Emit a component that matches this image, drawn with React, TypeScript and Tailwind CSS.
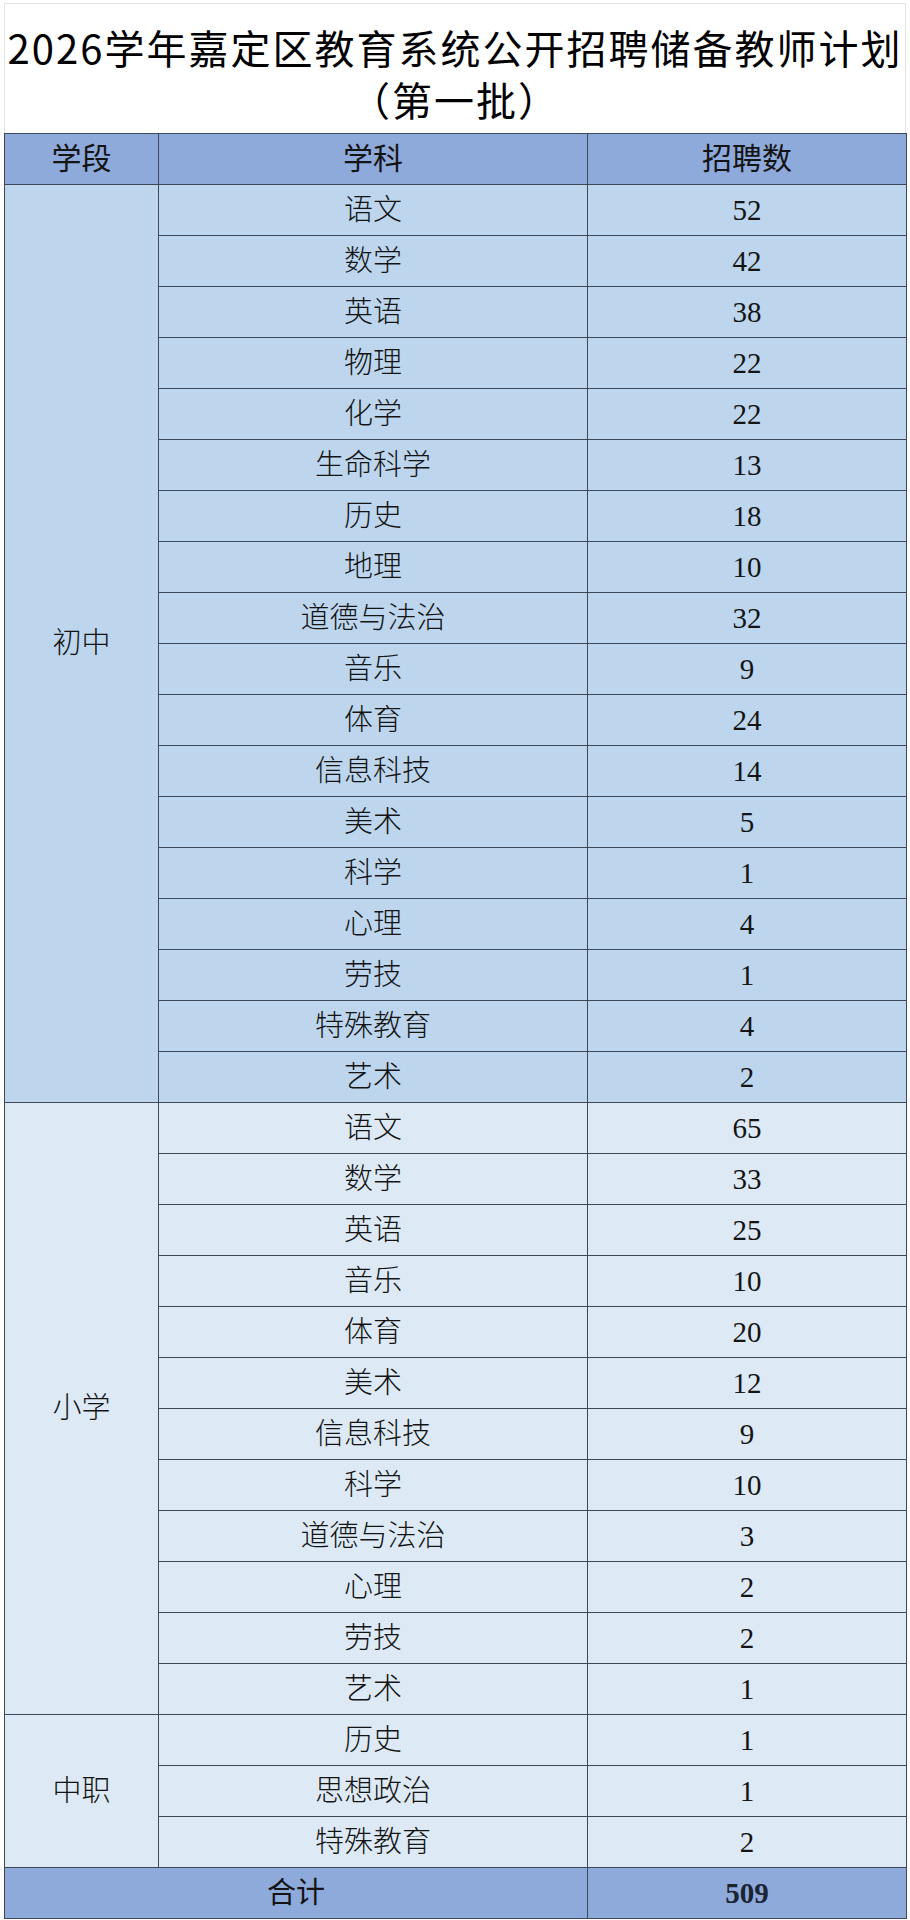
import React from "react";

type Group = {
  stage: string;
  bg: string;
  rows: [string, number][];
};

const groups: Group[] = [
  {
    stage: "初中",
    bg: "bg-[#bdd6ee]",
    rows: [
      ["语文", 52],
      ["数学", 42],
      ["英语", 38],
      ["物理", 22],
      ["化学", 22],
      ["生命科学", 13],
      ["历史", 18],
      ["地理", 10],
      ["道德与法治", 32],
      ["音乐", 9],
      ["体育", 24],
      ["信息科技", 14],
      ["美术", 5],
      ["科学", 1],
      ["心理", 4],
      ["劳技", 1],
      ["特殊教育", 4],
      ["艺术", 2],
    ],
  },
  {
    stage: "小学",
    bg: "bg-[#ddeaf6]",
    rows: [
      ["语文", 65],
      ["数学", 33],
      ["英语", 25],
      ["音乐", 10],
      ["体育", 20],
      ["美术", 12],
      ["信息科技", 9],
      ["科学", 10],
      ["道德与法治", 3],
      ["心理", 2],
      ["劳技", 2],
      ["艺术", 1],
    ],
  },
  {
    stage: "中职",
    bg: "bg-[#ddeaf6]",
    rows: [
      ["历史", 1],
      ["思想政治", 1],
      ["特殊教育", 2],
    ],
  },
];

const cell = "border-[1.5px] border-[#3e4858] text-center align-middle p-0";

export default function App() {
  const total = groups.reduce((s, g) => s + g.rows.reduce((a, r) => a + r[1], 0), 0);

  return (
    <div className="w-[910px] min-h-[1920px] bg-white pt-[3px] px-[4px] text-[#141414]">
      <div className="border border-b-0 border-[#e3e3e3] pt-[17px] pb-[8px] text-center text-[40px] leading-[52px] tracking-[2px] whitespace-nowrap font-['Noto_Sans_CJK_SC',sans-serif] text-black">
        <div>2026学年嘉定区教育系统公开招聘储备教师计划</div>
        <div>（第一批）</div>
      </div>

      <table className="w-[902px] table-fixed border-collapse font-['Liberation_Serif','Noto_Sans_CJK_SC',serif] text-[29px] leading-none font-light">
        <colgroup>
          <col className="w-[154px]" />
          <col className="w-[429px]" />
          <col className="w-[319px]" />
        </colgroup>
        <thead>
          <tr className="h-[51px] bg-[#8eaadb] text-[30px]">
            <th className={`${cell} font-normal`}>学段</th>
            <th className={`${cell} font-normal`}>学科</th>
            <th className={`${cell} font-normal`}>招聘数</th>
          </tr>
        </thead>
        <tbody>
          {groups.map((g) =>
            g.rows.map(([subject, n], i) => (
              <tr key={g.stage + subject} className={`h-[51px] ${g.bg}`}>
                {i === 0 && (
                  <td rowSpan={g.rows.length} className={cell}>
                    {g.stage}
                  </td>
                )}
                <td className={cell}>{subject}</td>
                <td className={cell}>{n}</td>
              </tr>
            ))
          )}
          <tr className="h-[51px] bg-[#8eaadb]">
            <td colSpan={2} className={`${cell} font-normal`}>
              合计
            </td>
            <td className={`${cell} font-bold text-[#1b2433]`}>{total}</td>
          </tr>
        </tbody>
      </table>
    </div>
  );
}
